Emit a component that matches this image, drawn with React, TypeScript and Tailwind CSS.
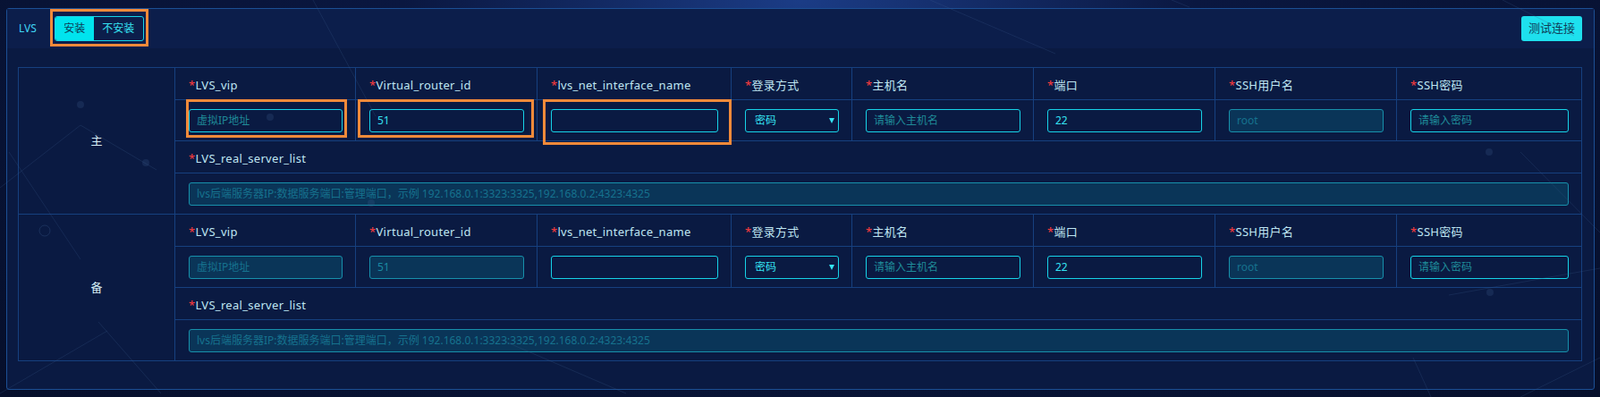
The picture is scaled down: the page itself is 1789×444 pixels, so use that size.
import React from "react";

const cols = [
  { label: "LVS_vip" },
  { label: "Virtual_router_id" },
  { label: "lvs_net_interface_name" },
  { label: "登录方式" },
  { label: "主机名" },
  { label: "端口" },
  { label: "SSH用户名" },
  { label: "SSH密码" },
];

const widths = [175, 202, 203, 217, 135, 203, 203, 203, 207];

function Label({ text }: { text: string }) {
  return (
    <span className="text-[13px] tracking-[0.3px] text-[#bfe6f2] whitespace-nowrap">
      <span className="text-[#ff3d3d]">*</span>
      {text}
    </span>
  );
}

function Field({
  value,
  placeholder,
  disabled,
}: {
  value?: string;
  placeholder?: string;
  disabled?: boolean;
}) {
  return (
    <input
      readOnly
      value={value ?? ""}
      placeholder={placeholder}
      className={
        disabled
          ? "block w-full h-[26px] rounded-[3px] border border-[#1790ab] bg-[#0a3558] px-[8px] text-[12px] text-[#1a8aa3] placeholder:text-[#16728e] outline-none font-['Noto_Sans','Noto_Sans_CJK_SC',sans-serif]"
          : "block w-full h-[26px] rounded-[3px] border border-[#16d3e8] bg-transparent px-[8px] text-[12px] text-[#35e2f2] placeholder:text-[#1f8a98] outline-none font-['Noto_Sans','Noto_Sans_CJK_SC',sans-serif]"
      }
    />
  );
}

function Select() {
  return (
    <div className="flex items-center justify-between h-[26px] w-full rounded-[3px] border border-[#16d3e8] pl-[10px] pr-[4px] text-[12px] text-[#35e2f2]">
      <span>密码</span>
      <svg width="6" height="6" viewBox="0 0 6 6">
        <path d="M0 0 H6 L3 6 Z" fill="#35e2f2" />
      </svg>
    </div>
  );
}

function Section({ name, standby }: { name: string; standby?: boolean }) {
  const td = "border border-[#16407f] px-[15px] pr-[14px]";
  return (
    <>
      <tr className="h-[36px]">
        <td rowSpan={4} className="border border-[#16407f] text-center text-[13px] text-[#d6eef6]">
          {name}
        </td>
        {cols.map((c) => (
          <td key={c.label} className={td}>
            <Label text={c.label} />
          </td>
        ))}
      </tr>
      <tr className="h-[46px]">
        <td className={td}>
          <Field placeholder="虚拟IP地址" disabled={standby} />
        </td>
        <td className={td}>
          <Field value="51" disabled={standby} />
        </td>
        <td className={td}>
          <Field />
        </td>
        <td className={td}>
          <Select />
        </td>
        <td className={td}>
          <Field placeholder="请输入主机名" />
        </td>
        <td className={td}>
          <Field value="22" />
        </td>
        <td className={td}>
          <Field placeholder="root" disabled />
        </td>
        <td className={td}>
          <Field placeholder="请输入密码" />
        </td>
      </tr>
      <tr className="h-[36px]">
        <td colSpan={8} className={td}>
          <Label text="LVS_real_server_list" />
        </td>
      </tr>
      <tr className="h-[46px]">
        <td colSpan={8} className={td}>
          <Field
            disabled
            placeholder="lvs后端服务器IP:数据服务端口:管理端口，示例 192.168.0.1:3323:3325,192.168.0.2:4323:4325"
          />
        </td>
      </tr>
    </>
  );
}

export default function App() {
  return (
    <div className="relative w-[1789px] h-[444px] overflow-hidden bg-[radial-gradient(ellipse_at_50%_0%,#1b3c86_0%,#0a1740_35%,#060f2b_100%)] font-['Noto_Sans','Noto_Sans_CJK_SC',sans-serif] pt-[9px] pl-[7px]">
      <div className="w-[1776px] h-[427px] rounded-[3px] border border-[#1c4f94] bg-[#0a1a42] flex flex-col">
        <div className="h-[44px] bg-[#0c1e4b] flex items-center pl-[13px] pr-[13px]">
          <span className="text-[12px] text-[#3fd6f5]">LVS</span>
          <div className="ml-[20px] flex h-[28px] rounded-[3px] border border-[#16d3e8] overflow-hidden text-[12px]">
            <div className="w-[43px] bg-[#00e4ee] text-[#0d3a55] flex items-center justify-center">安装</div>
            <div className="w-[55px] text-[#35e2f2] flex items-center justify-center">不安装</div>
          </div>
          <div className="flex-1" />
          <button className="w-[68px] h-[28px] rounded-[3px] bg-[#1ee0ee] text-[13px] text-[#0f3d58]">
            测试连接
          </button>
        </div>
        <div className="mt-[21px] ml-[12px]">
          <table className="table-fixed border-collapse w-[1748px]">
            <colgroup>
              {widths.map((w, i) => (
                <col key={i} style={{ width: w }} />
              ))}
            </colgroup>
            <tbody>
              <Section name="主" />
              <Section name="备" standby />
            </tbody>
          </table>
        </div>
      </div>

      <svg className="pointer-events-none absolute inset-0" width="1789" height="444">
        <g stroke="#3a5a8a" strokeOpacity="0.25" strokeWidth="1" fill="none">
          <line x1="0" y1="210" x2="90" y2="140" />
          <line x1="90" y1="140" x2="175" y2="190" />
          <line x1="10" y1="170" x2="90" y2="290" />
          <line x1="110" y1="360" x2="180" y2="440" />
          <line x1="0" y1="440" x2="120" y2="370" />
          <line x1="350" y1="0" x2="420" y2="130" />
          <line x1="1040" y1="0" x2="1180" y2="60" />
          <line x1="1310" y1="0" x2="1330" y2="8" />
          <line x1="1680" y1="0" x2="1760" y2="40" />
          <line x1="1700" y1="170" x2="1789" y2="260" />
          <line x1="1620" y1="330" x2="1789" y2="300" />
          <line x1="1580" y1="400" x2="1600" y2="444" />
          <line x1="1700" y1="444" x2="1789" y2="400" />
          <line x1="560" y1="380" x2="700" y2="440" />
        </g>
        <g fill="#3a5a8a" fillOpacity="0.25">
          <circle cx="90" cy="117" r="4" />
          <circle cx="163" cy="182" r="4" />
          <circle cx="302" cy="131" r="4" />
          <circle cx="415" cy="227" r="4" />
          <circle cx="1665" cy="170" r="4" />
          <circle cx="1666" cy="327" r="4" />
        </g>
        <circle cx="50" cy="258" r="6" fill="none" stroke="#3a5a8a" strokeOpacity="0.35" />
      </svg>

      <div className="pointer-events-none absolute left-[56px] top-[10px] w-[110px] h-[42px] border-[3px] border-[#f28a3a]" />
      <div className="pointer-events-none absolute left-[208px] top-[111px] w-[180px] h-[43px] border-[3px] border-[#f28a3a]" />
      <div className="pointer-events-none absolute left-[400px] top-[111px] w-[197px] h-[43px] border-[3px] border-[#f28a3a]" />
      <div className="pointer-events-none absolute left-[607px] top-[111px] w-[211px] h-[51px] border-[3px] border-[#f28a3a]" />
    </div>
  );
}
